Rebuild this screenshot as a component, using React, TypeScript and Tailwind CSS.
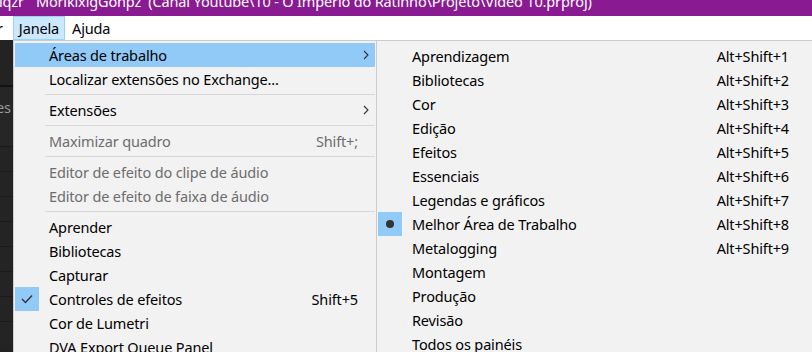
import React from "react";

type Item =
  | { sep: true }
  | {
      sep?: false;
      label: string;
      shortcut?: string;
      disabled?: boolean;
      arrow?: boolean;
      highlight?: boolean;
      mark?: "check" | "dot";
    };

const mainItems: Item[] = [
  { label: "Áreas de trabalho", arrow: true, highlight: true },
  { label: "Localizar extensões no Exchange..." },
  { sep: true },
  { label: "Extensões", arrow: true },
  { sep: true },
  { label: "Maximizar quadro", shortcut: "Shift+;", disabled: true },
  { sep: true },
  { label: "Editor de efeito do clipe de áudio", disabled: true },
  { label: "Editor de efeito de faixa de áudio", disabled: true },
  { sep: true },
  { label: "Aprender" },
  { label: "Bibliotecas" },
  { label: "Capturar" },
  { label: "Controles de efeitos", shortcut: "Shift+5", mark: "check" },
  { label: "Cor de Lumetri" },
  { label: "DVA Export Queue Panel" },
];

const subItems: Item[] = [
  { label: "Aprendizagem", shortcut: "Alt+Shift+1" },
  { label: "Bibliotecas", shortcut: "Alt+Shift+2" },
  { label: "Cor", shortcut: "Alt+Shift+3" },
  { label: "Edição", shortcut: "Alt+Shift+4" },
  { label: "Efeitos", shortcut: "Alt+Shift+5" },
  { label: "Essenciais", shortcut: "Alt+Shift+6" },
  { label: "Legendas e gráficos", shortcut: "Alt+Shift+7" },
  { label: "Melhor Área de Trabalho", shortcut: "Alt+Shift+8", mark: "dot" },
  { label: "Metalogging", shortcut: "Alt+Shift+9" },
  { label: "Montagem" },
  { label: "Produção" },
  { label: "Revisão" },
  { label: "Todos os painéis" },
];

function Chevron() {
  return (
    <svg width="6" height="10" viewBox="0 0 6 10" className="block">
      <path d="M1 1 L5 5 L1 9" fill="none" stroke="#333" strokeWidth="1.1" />
    </svg>
  );
}

function Check() {
  return (
    <svg width="12" height="10" viewBox="0 0 12 10" className="block">
      <path d="M1 5 L4.5 8.5 L11 1.5" fill="none" stroke="#333" strokeWidth="1.4" />
    </svg>
  );
}

function MenuRow({ item, sub }: { item: Item; sub?: boolean }) {
  if (item.sep) {
    return (
      <div className="h-[7px] flex items-center">
        <div className="w-[30px] shrink-0" />
        <div className="flex-1 h-px bg-[#d7d7d7]" />
      </div>
    );
  }
  return (
    <div
      className={`h-[24px] flex items-center ${item.highlight ? "bg-[#91c9f7]" : ""} ${
        item.disabled ? "text-[#6d6d6d]" : "text-black"
      }`}
    >
      <div className="w-[30px] h-[24px] shrink-0 flex">
        {item.mark && (
          <div className="w-[24px] h-[24px] bg-[#91c9f7] flex items-center justify-center">
            {item.mark === "check" ? (
              <Check />
            ) : (
              <div className="w-[8px] h-[8px] rounded-full bg-[#333]" />
            )}
          </div>
        )}
      </div>
      <div className="flex-1 pl-[4px] whitespace-nowrap">{item.label}</div>
      {item.shortcut && <div className="whitespace-nowrap">{item.shortcut}</div>}
      {sub ? (
        <div className="w-[45px] shrink-0" />
      ) : (
        <div className="w-[17px] shrink-0 flex items-center pl-[5px]">
          {item.arrow && <Chevron />}
        </div>
      )}
    </div>
  );
}

export default function App() {
  return (
    <div
      className="relative w-[812px] h-[352px] overflow-hidden bg-[#232323] text-[14.5px] tracking-[-0.15px] leading-[24px]"
      style={{ fontFamily: "'Segoe UI', 'Noto Sans', sans-serif" }}
    >
      {/* Title bar */}
      <div className="h-[16px] bg-[#891a91] overflow-hidden">
        <div className="mt-[-11px] ml-[-1px] text-white whitespace-nowrap leading-[24px]">
          lqzr<span className="inline-block w-[12px]" />MorikixigGohpz&nbsp;&nbsp;(Canal Youtube\10 - O Império do Ratinho\Projeto\Video 10.prproj)
        </div>
      </div>
      {/* Menu bar */}
      <div className="h-[24px] bg-white flex items-stretch text-black">
        <div className="pr-[5px] flex items-center ml-[-3px]">r</div>
        <div className="ml-[5px] px-[5px] bg-[#cce8ff] border border-[#99d1ff] flex items-center">
          Janela
        </div>
        <div className="px-[7px] flex items-center">Ajuda</div>
      </div>
      {/* App content (dark) */}
      <div className="flex flex-col">
        <div className="h-[47px] bg-[#232323] border-b-2 border-[#121212]" />
        <div className="h-[59px] bg-[#262626] text-[#9a9a9a] pt-[8px] leading-[24px]">
          <span className="ml-[-4px]">es</span>
        </div>
        {[0, 1, 2, 3, 4, 5, 6, 7].map((i) => (
          <div key={i} className="h-[25px] border-t border-[#1a1a1a] bg-[#242424]" />
        ))}
      </div>

      {/* Main dropdown */}
      <div className="absolute left-[13px] top-[40px] w-[364px] bg-[#f2f2f2] border border-[#cccccc] pt-[2px] px-[1px]">
        {mainItems.map((it, i) => (
          <MenuRow key={i} item={it} />
        ))}
      </div>

      {/* Submenu */}
      <div className="absolute left-[376px] top-[40px] w-[460px] bg-[#f2f2f2] border border-[#cccccc] pt-[3px] px-[1px]">
        {subItems.map((it, i) => (
          <MenuRow key={i} item={it} sub />
        ))}
      </div>
    </div>
  );
}
